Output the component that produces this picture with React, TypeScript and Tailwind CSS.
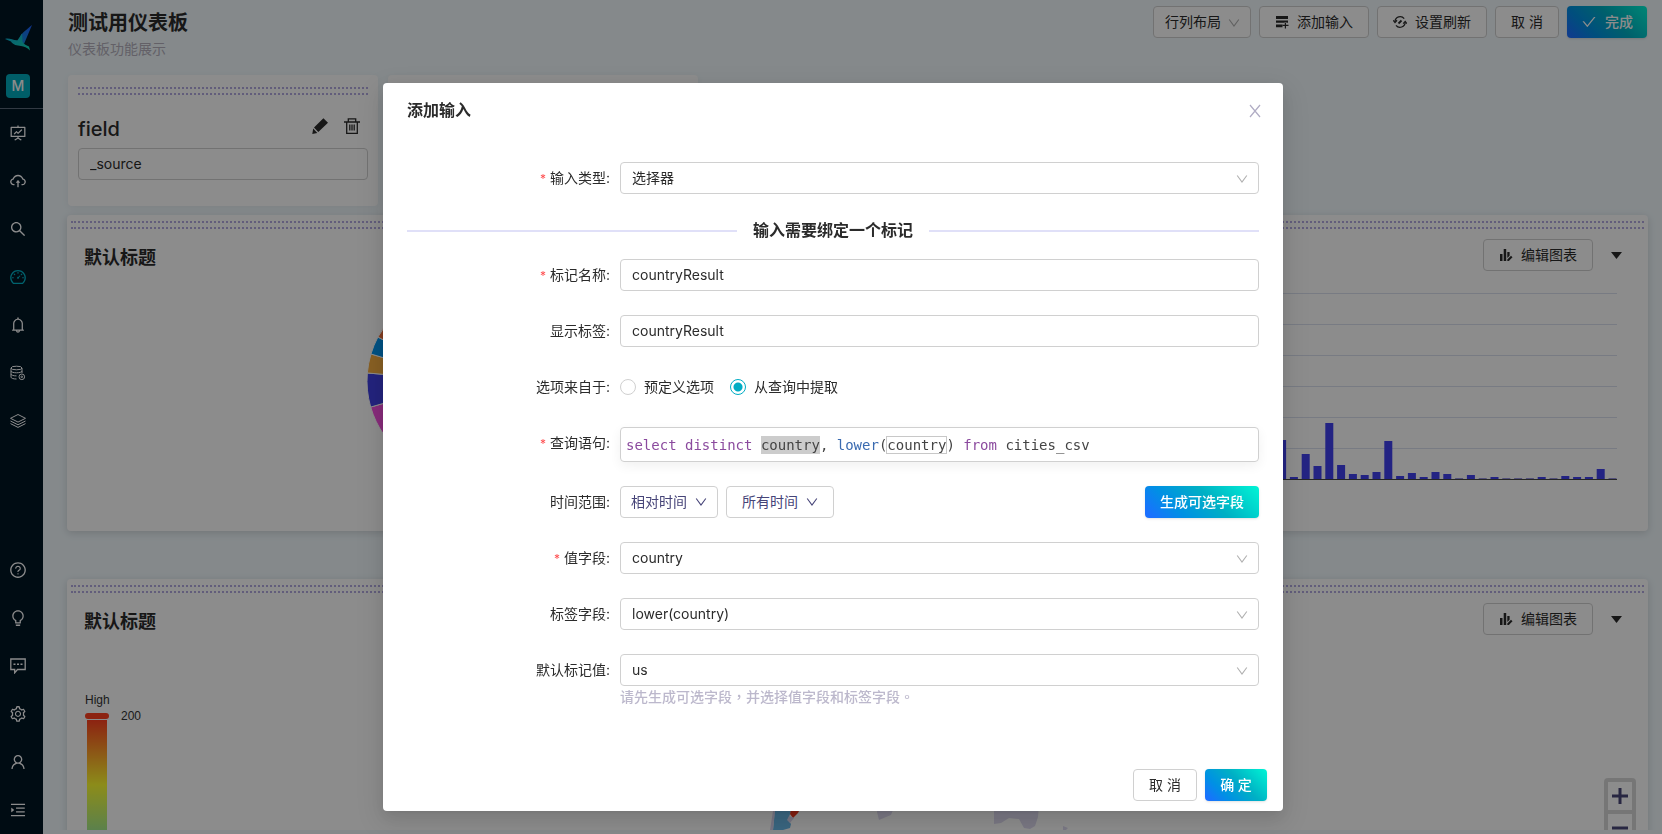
import React from 'react';
import {
  AiOutlineBell,
  AiOutlineBulb,
  AiOutlineCheck,
  AiOutlineCloudUpload,
  AiOutlineDashboard,
  AiOutlineFundProjectionScreen,
  AiOutlineMenuUnfold,
  AiOutlineQuestionCircle,
  AiOutlineSearch,
  AiOutlineSetting,
  AiOutlineUser,
} from 'react-icons/ai';

const DatabaseIcon = () => (
  <svg className="w-4 h-4" viewBox="0 0 16 16" fill="none" stroke="currentColor">
    <ellipse cx="6.5" cy="3" rx="5.5" ry="1.8" />
    <path d="M1 3v9.200c0 1 2.400 1.800 5.500 1.800M12 3v5M1 6c0 1 2.500 1.800 5.500 1.800S12 7 12 6M1 9.100c0 1 2.500 1.800 5.500 1.800" />
    <circle cx="11.8" cy="11.8" r="2.8" />
    <circle cx="11.8" cy="11.8" r="0.8" />
  </svg>
);

const LayersIcon = () => (
  <svg className="w-4 h-4" viewBox="0 0 16 16" fill="none" stroke="currentColor" strokeLinejoin="round">
    <path d="M8 1.500 15.500 5.300 8 9.100.5 5.300zM.5 8 8 11.800 15.500 8M.5 10.600 8 14.400l7.500-3.800" />
  </svg>
);

const MessageIcon = () => (
  <svg className="w-4 h-4" viewBox="0 0 16 16" fill="none" stroke="currentColor" strokeWidth="1.3">
    <path d="M.8 1h14.400v10.500H7.500L4.700 14.800V11.500H.8z" />
    <path d="M3.500 6.200h2M7 6.200h2M10.500 6.200h2" strokeWidth="1.6" />
  </svg>
);

const AddInputIcon = () => (
  <svg className="w-[14px] h-[14px]" viewBox="0 0 14 14" fill="currentColor">
    <path d="M1 1h12v3H1zM1 5.500h12v2.300h-1.700v-.8H9.700v.8H1zM1 9.500h6.500v2.800H1z" />
    <path d="M9.800 7.500H11v2.300h2.500V11H11v2.500H9.800V11H7.500V9.800h2.300z" />
  </svg>
);

const RefreshIcon = () => (
  <svg className="w-[14px] h-[14px]" viewBox="0 0 14 14" fill="none" stroke="currentColor" strokeWidth="1.3">
    <path d="M2 6.500A5.200 5.200 0 0 1 11.200 3.600M12.200 7.200A5.200 5.200 0 0 1 3 10.400" />
    <path d="M.2 5.300 2 7.500l2-2.200M10.200 8.600l2-2.200 1.700 2.200" />
    <path d="M5.500 8.500l3-3" strokeWidth="1.8" />
  </svg>
);

const EditChartIcon = () => (
  <svg className="w-[14px] h-[14px]" viewBox="0 0 14 14" fill="currentColor">
    <path d="M1 6h2.500v7H1zM4.700 1h2.500v12H4.700zM8.300 4h2.300v3.800L8.300 10z" />
    <path d="M8.300 11.500 12 7.800l1.500 1.500L9.800 13H8.300z" />
  </svg>
);

const PencilIcon = () => (
  <svg className="w-4 h-4" viewBox="0 0 16 16" fill="currentColor">
    <path d="M11.400.2 16 4.800 6.300 14 2 9.400zM1.200 10.600 5.300 15 .3 16z" />
  </svg>
);

const TrashIcon = () => (
  <svg className="w-4 h-4" viewBox="0 0 16 16" fill="none" stroke="currentColor" strokeWidth="1.3">
    <path d="M0 4h16M4.300 4V.8h7.400V4M2.700 4v11.300h10.600V4" />
    <path d="M5.800 6.500v6M8 6.500v6M10.200 6.500v6" />
  </svg>
);

const DownIcon = ({ className = '' }: any) => (
  <svg className={`h-3 w-3 ${className}`} viewBox="0 0 12 12" fill="none" stroke="currentColor" strokeWidth="1.1">
    <path d="M1.200 2.500 6 9l4.800-6.500" />
  </svg>
);

const CloseIcon = () => (
  <svg className="h-4 w-4" viewBox="0 0 16 16" fill="none" stroke="currentColor" strokeWidth="1.2">
    <path d="M3 2l10 12M13 2 3 14" />
  </svg>
);

const Logo = () => (
  <svg className="w-7 h-7" viewBox="0 0 28 28">
    <defs>
      <linearGradient id="wing" x1="1" y1="0" x2="0" y2="1">
        <stop offset="0" stopColor="#1f5cff" />
        <stop offset="1" stopColor="#0f93d8" />
      </linearGradient>
      <linearGradient id="body" x1="0" y1="0" x2="1" y2="1">
        <stop offset="0" stopColor="#0fa4d4" />
        <stop offset="1" stopColor="#10e0b8" />
      </linearGradient>
    </defs>
    <path d="M28 1C22 6 18 9 16.500 12L15 17l5 3z" fill="url(#wing)" />
    <path d="M1 15c4-1.500 8 1.500 12.500 1.200L18 9.500 18.500 18c1 2 3.500 3 6.500 4.500l1 4c-3-3-6-4-9-4.500-4-.5-8-1-10-4.500z" fill="url(#body)" />
  </svg>
);

const topMenu = [
  { name: '展示', icon: AiOutlineFundProjectionScreen },
  { name: '上传', icon: AiOutlineCloudUpload },
  { name: '搜索', icon: AiOutlineSearch },
  { name: '仪表板', icon: AiOutlineDashboard, active: true },
  { name: '告警', icon: AiOutlineBell },
  { name: '数据源', icon: DatabaseIcon },
  { name: '图层', icon: LayersIcon },
];

const bottomMenu = [
  { name: '帮助', icon: AiOutlineQuestionCircle },
  { name: '提示', icon: AiOutlineBulb },
  { name: '消息', icon: MessageIcon },
  { name: '设置', icon: AiOutlineSetting },
  { name: '用户', icon: AiOutlineUser },
  { name: '展开菜单', icon: AiOutlineMenuUnfold },
];

const MenuItem = ({ name, icon: Icon, active }: any) => (
  <a
    href="#"
    aria-label={name}
    className={`flex h-12 w-9 items-center justify-center ${active ? 'text-[#00b4c8]' : 'text-white'}`}
  >
    <Icon className="w-[18px] h-[18px]" />
  </a>
);

const Sidebar = () => (
  <nav className="flex w-[43px] shrink-0 flex-col bg-[#001624]">
    <div className="flex h-[109px] flex-col border-b border-[#5b6b7a] pt-6">
      <div className="pl-1"><Logo /></div>
      <div className="ml-[6px] mt-[22px] flex h-6 w-6 items-center justify-center rounded bg-[#00acbe] text-sm font-medium text-white">M</div>
    </div>
    {topMenu.map((m) => <MenuItem key={m.name} {...m} />)}
    <div className="mt-auto">
      {bottomMenu.map((m) => <MenuItem key={m.name} {...m} />)}
    </div>
  </nav>
);

const Button = ({ children, className = '' }: any) => (
  <button
    type="button"
    className={`flex h-8 items-center justify-center rounded border border-[#d0d0d0] bg-white text-sm text-[#2b2b2b] ${className}`}
  >
    {children}
  </button>
);

const PrimaryButton = ({ children, className = '' }: any) => (
  <button
    type="button"
    className={`flex h-8 items-center justify-center rounded bg-[linear-gradient(45deg,#1a70ff_5%,#0090e4_28%,#00b0c4_58%,#00f0d4_97%)] text-sm font-medium text-white shadow-sm ${className}`}
  >
    {children}
  </button>
);

const Grip = ({ className = '' }: any) => (
  <div className={`h-2 border-y-2 border-dotted border-[#b2a9e0] ${className}`}></div>
);

const InputCard = ({ children }: any) => (
  <div className="h-[131px] w-[310px] rounded bg-white px-[10px] pt-3 shadow-[0_2px_8px_rgba(0,0,0,0.06)]">
    {children}
  </div>
);

const Panel = ({ className = '', children }: any) => (
  <section className={`shrink-0 rounded bg-white pt-[6px] shadow-[0_2px_8px_rgba(0,0,0,0.15)] ${className}`}>
    <Grip className="mx-1" />
    <div className="mt-[10px] flex h-8 items-center pl-[17px] pr-[26px]">
      <h2 className="flex-1 pt-[6px] text-lg font-bold text-[#2b2b2b]">默认标题</h2>
      <Button className="w-[110px] gap-2">
        <EditChartIcon />
        编辑图表
      </Button>
      <button type="button" aria-label="更多" className="ml-[18px] text-[#2b2b2b]">
        <svg className="h-[7px] w-[11px]" viewBox="0 0 11 7" fill="currentColor">
          <path d="M0 0h11L5.500 7z" />
        </svg>
      </button>
    </div>
    {children}
  </section>
);

// heights in px, right to left from the end of the axis
const BARS = [1, 10, 2, 2, 3, 1, 2, 1, 1, 1, 2, 1, 4, 1, 5, 7, 2, 6, 3, 38, 7, 4, 5, 14, 56, 13, 25, 2, 39, 22, 48, 12, 64, 30, 18, 41];

const BarChart = () => (
  <svg className="h-[260px] w-[428px]" viewBox="0 0 428 260">
    {[22, 53, 84, 115, 146, 177].map((y) => (
      <path key={y} d={`M0 ${y + 0.5}H428`} stroke="#dae0ee" />
    ))}
    {BARS.map((h, i) => (
      <rect
        key={i}
        x={419.5 - i * 11.8}
        y={208 - h}
        width="8"
        height={h}
        fill={h === 1 ? '#9490dc' : '#4040ee'}
      />
    ))}
    <path d="M0 208.500H428" stroke="#444" />
  </svg>
);

const SLICES = [
  { from: 90, to: 163.9, color: '#f74fe0' },
  { from: 163.9, to: 184.9, color: '#4040e4' },
  { from: 184.9, to: 196.7, color: '#f7ae40' },
  { from: 196.7, to: 207.9, color: '#0095f0' },
  { from: 207.9, to: 250, color: '#f0713c' },
  { from: 250, to: 450, color: '#3ecf8e' },
];

const point = (deg: number) => {
  const a = (deg * Math.PI) / 180;
  return `${100 + 94 * Math.cos(a)} ${110 + 94 * Math.sin(a)}`;
};

const PieChart = () => (
  <svg className="h-[260px] w-[200px]" viewBox="0 0 200 260">
    {SLICES.map((s) => (
      <path
        key={s.from}
        d={`M100 110L${point(s.from)}A94 94 0 ${s.to - s.from > 180 ? 1 : 0} 1 ${point(s.to)}Z`}
        fill={s.color}
        stroke="#fff"
      />
    ))}
  </svg>
);

const MapChart = () => (
  <svg className="h-[200px] flex-1">
    <path d="M588 170h14l2 6-3 9 3 4-1 4-7 2h-10l1-10z" fill="#68b8e8" />
    <path d="M586 176h2l-2 19h-3z" fill="#d8d4ee" />
    <path d="M605 170h10l-4 8-5 5-3-4z" fill="#f0361c" />
    <path d="M602 181l5 2-4 5-3-3z" fill="#d8d4ee" />
    <path d="M690 170h18l-4 10-5 2-7 3-2-8z" fill="#dedaf0" />
    <path d="M807 170h45l-1 12-3 9-5 3-6-1-5-9-10-1-8 5-7 1z" fill="#dedaf0" />
    <path d="M876 191l5 2-3 3h-2z" fill="#dedaf0" />
  </svg>
);

const Dashboard = () => (
  <main className="flex min-w-0 flex-1 flex-col overflow-hidden bg-[#f2fafe] pb-1">
    <div className="flex min-h-0 flex-1 flex-col overflow-hidden pl-6 pr-[14px]">
      <header className="flex h-[75px] shrink-0 items-start justify-between px-px pt-[6px]">
        <div>
          <h1 className="pt-px text-xl leading-8 font-bold text-[#2b2b2b]">测试用仪表板</h1>
          <p className="text-sm leading-5 text-[#b4b0bc]">仪表板功能展示</p>
        </div>
        <div className="flex gap-2">
          <div className="relative">
            <select aria-label="布局" className="h-8 w-[98px] appearance-none rounded border border-[#d0d0d0] bg-white pl-[11px] text-sm text-[#2b2b2b]">
              <option>行列布局</option>
            </select>
            <DownIcon className="pointer-events-none absolute right-[11px] top-[11px] text-[#b0b0b0]" />
          </div>
          <Button className="w-[110px] gap-2"><AddInputIcon />添加输入</Button>
          <Button className="w-[110px] gap-2"><RefreshIcon />设置刷新</Button>
          <Button className="w-16">取 消</Button>
          <PrimaryButton className="w-20 gap-2"><AiOutlineCheck className="h-4 w-4" />完成</PrimaryButton>
        </div>
      </header>

      <div className="flex shrink-0 gap-[10px] px-px">
        <InputCard>
          <Grip />
          <div className="mt-[19px] flex h-[30px] items-center">
            <label htmlFor="field" className="flex-1 text-xl font-medium text-[#2b2b2b]">field</label>
            <div className="mb-[6px] mr-2 flex gap-4 text-[#2b2b2b]">
              <button type="button" aria-label="编辑"><PencilIcon /></button>
              <button type="button" aria-label="删除"><TrashIcon /></button>
            </div>
          </div>
          <input id="field" defaultValue="_source" className="mt-1 h-8 w-full rounded border border-[#d0d0d0] bg-white px-[11px] pb-[2px] text-sm text-[#2b2b2b]" />
        </InputCard>
        <InputCard />
      </div>

      <Panel className="mt-[9px] h-[316px]">
        <div className="flex">
          <div className="flex flex-1 justify-center pl-2"><PieChart /></div>
          <div className="flex flex-1 justify-end pr-[31px]"><BarChart /></div>
        </div>
      </Panel>

      <Panel className="mt-12 h-[316px]">
        <div className="relative flex">
          <div className="w-[120px] pl-[18px] pt-[57px] font-['Liberation_Sans',sans-serif] text-xs leading-4 text-[#333]">
            <p>High</p>
            <div className="flex h-4 items-center gap-3">
              <div className="h-[6px] w-6 rounded-sm bg-[#ff4020]"></div>
              <span>200</span>
            </div>
            <div className="-mt-1 ml-[2px] h-[130px] w-5 bg-[linear-gradient(to_bottom,#ff4020,#ffff30_50%,#98e898_90%)]"></div>
          </div>
          <MapChart />
          <div className="absolute right-3 top-[143px] flex w-8 flex-col gap-1 rounded bg-[#d8d8d8] p-1 text-[#4a4878]">
            <button type="button" aria-label="放大" className="flex h-7 items-center justify-center bg-white">
              <svg className="h-4 w-4" viewBox="0 0 16 16" stroke="currentColor" strokeWidth="3"><path d="M0 8h16M8 0v16" /></svg>
            </button>
            <button type="button" aria-label="缩小" className="flex h-7 items-center justify-center bg-white">
              <svg className="h-4 w-4" viewBox="0 0 16 16" stroke="currentColor" strokeWidth="3"><path d="M0 8h16" /></svg>
            </button>
          </div>
        </div>
      </Panel>
    </div>
  </main>
);

const fieldStyle = 'h-8 w-full appearance-none rounded border border-[#d0d0d0] bg-white px-[11px] text-sm text-[#2b2b2b]';

const Row = ({ label, id, required, children, className = 'mb-6' }: any) => (
  <div className={`flex items-start ${className}`}>
    <label htmlFor={id} id={id && `${id}-label`} className="w-1/4 pr-[10px] text-right text-sm leading-8 text-[#2b2b2b]">
      {required && <span className="mr-1 text-xs text-[#ff4d4f]">*</span>}
      {label}:
    </label>
    <div className="w-3/4">{children}</div>
  </div>
);

const Select = ({ id, value }: any) => (
  <div className="relative">
    <select id={id} className={fieldStyle}>
      <option>{value}</option>
    </select>
    <DownIcon className="pointer-events-none absolute right-[11px] top-[11px] text-[#b0b0b0]" />
  </div>
);

const Radio = ({ label, checked }: any) => (
  <label className="flex items-center gap-2 text-sm text-[#2b2b2b]">
    <input
      type="radio"
      name="source"
      defaultChecked={checked}
      className="h-4 w-4 appearance-none rounded-full border border-[#d0d0d0] bg-white checked:border-[#00acc4] checked:bg-[radial-gradient(circle,#00acc4_4px,#fff_5px)]"
    />
    {label}
  </label>
);

const AddInputModal = () => (
  <div className="fixed inset-0 flex items-start justify-center overflow-hidden bg-black/45 pl-1 pt-[83px]">
    <div
      role="dialog"
      aria-labelledby="modal-title"
      className="w-[900px] rounded bg-white shadow-[0_3px_6px_-4px_rgba(0,0,0,0.12),0_6px_16px_0_rgba(0,0,0,0.08),0_9px_28px_8px_rgba(0,0,0,0.08)]"
    >
      <div className="flex h-[55px] items-center justify-between pl-6 pr-5">
        <h2 id="modal-title" className="pb-[2px] text-base font-bold text-[#2b2b2b]">添加输入</h2>
        <button type="button" aria-label="关闭" className="text-[#b0acc4]">
          <CloseIcon />
        </button>
      </div>

      <form className="px-6 pt-6">
        <Row label="输入类型" id="type" required><Select id="type" value="选择器" /></Row>

        <div className="mb-4 flex h-[25px] items-center gap-4">
          <div className="h-[2px] flex-1 bg-[#e0e0f8]"></div>
          <h3 className="pb-[2px] text-base font-bold text-[#2b2b2b]">输入需要绑定一个标记</h3>
          <div className="h-[2px] flex-1 bg-[#e0e0f8]"></div>
        </div>

        <Row label="标记名称" id="token" required>
          <input id="token" defaultValue="countryResult" className={`${fieldStyle} pb-[2px]`} />
        </Row>
        <Row label="显示标签" id="display">
          <input id="display" defaultValue="countryResult" className={`${fieldStyle} pb-[2px]`} />
        </Row>
        <Row label="选项来自于">
          <div className="flex h-8 items-center gap-4">
            <Radio label="预定义选项" />
            <Radio label="从查询中提取" checked />
          </div>
        </Row>
        <Row label="查询语句" id="query" required>
          <div
            id="query"
            role="textbox"
            aria-labelledby="query-label"
            contentEditable
            suppressContentEditableWarning
            className="h-[35px] whitespace-pre rounded border border-[#d0d0d0] px-[5px] font-['DejaVu_Sans_Mono',monospace] text-sm leading-[35px] text-[#444] shadow-[0_4px_12px_rgba(0,0,0,0.06)]"
          >
            <span className="text-[#8b4a9e]">select</span> <span className="text-[#8b4a9e]">distinct</span>{' '}
            <span className="bg-[#cccccc] py-px">country</span>, <span className="text-[#3a6ab0]">lower</span>(
            <span className="outline outline-[#c8c8c8]">country</span>) <span className="text-[#8b4a9e]">from</span> cities_csv
          </div>
        </Row>
        <Row label="时间范围">
          <div className="flex gap-2">
            <Button className="w-[98px] gap-2 text-[#464478]">相对时间<DownIcon /></Button>
            <Button className="w-[108px] gap-2 text-[#464478]">所有时间<DownIcon /></Button>
            <PrimaryButton className="ml-auto w-[114px]">生成可选字段</PrimaryButton>
          </div>
        </Row>
        <Row label="值字段" id="value" required><Select id="value" value="country" /></Row>
        <Row label="标签字段" id="label"><Select id="label" value="lower(country)" /></Row>
        <Row label="默认标记值" id="default" className="mb-[55px]">
          <Select id="default" value="us" />
          <p className="font-['Noto_Sans_CJK_TC',sans-serif] text-sm leading-5 font-medium text-[#bcb8cc]">请先生成可选字段，并选择值字段和标签字段。</p>
        </Row>
      </form>

      <div className="flex justify-end gap-2 px-4 pb-[10px] pt-2">
        <Button className="w-16">取 消</Button>
        <PrimaryButton className="w-[62px]">确 定</PrimaryButton>
      </div>
    </div>
  </div>
);

export default function App() {
  return (
    <div className="flex h-screen overflow-hidden font-['Inter','Noto_Sans_CJK_SC',sans-serif]">
      <Sidebar />
      <Dashboard />
      <AddInputModal />
    </div>
  );
}
